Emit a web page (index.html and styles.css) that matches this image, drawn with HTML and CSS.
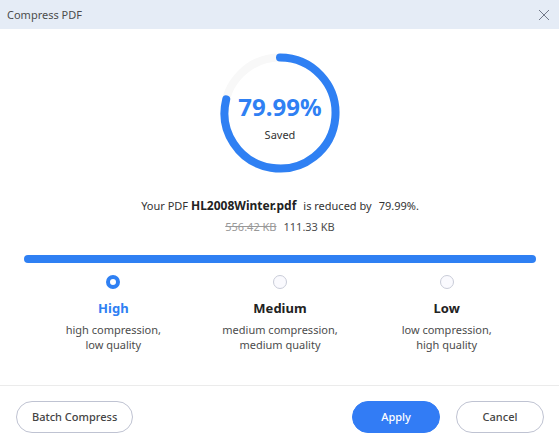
FILE: index.html
```html
<!DOCTYPE html>
<html lang="en">
<head>
<meta charset="utf-8">
<title>Compress PDF</title>
<link rel="stylesheet" href="styles.css">
</head>
<body>
<main class="dialog">
  <header class="titlebar">
    <h1 class="title">Compress PDF</h1>
    <button class="close" type="button" aria-label="Close">
      <svg width="10" height="10" viewBox="0 0 10 10"><path d="M0 0L10 10M10 0L0 10" stroke="#727989" stroke-width="1"/></svg>
    </button>
  </header>
  <section class="content">
    <div class="gauge">
      <svg class="ring" width="120" height="120" viewBox="0 0 120 120">
        <circle cx="60" cy="60" r="55.5" fill="none" stroke="#f8f8f8" stroke-width="8"/>
        <path d="M60 4.5A55.5 55.5 0 1 1 6.2 46.4" fill="none" stroke="#2f80f3" stroke-width="8" stroke-linecap="round"/>
      </svg>
      <div class="gauge-text">
        <strong class="percent">79.99%</strong>
        <span class="saved">Saved</span>
      </div>
    </div>
    <p class="summary"><span>Your PDF <b>HL2008Winter.pdf</b></span><span>is reduced by</span><span>79.99%.</span></p>
    <p class="sizes"><s>556.42 KB</s><span>111.33 KB</span></p>
    <div class="bar"></div>
    <div class="levels" role="radiogroup" aria-label="Compression level">
      <label class="level"><input type="radio" name="level" checked><span class="name">High</span><span class="note">high compression,<br>low quality</span></label>
      <label class="level"><input type="radio" name="level"><span class="name">Medium</span><span class="note">medium compression,<br>medium quality</span></label>
      <label class="level"><input type="radio" name="level"><span class="name">Low</span><span class="note">low compression,<br>high quality</span></label>
    </div>
  </section>
  <footer class="footer">
    <button class="btn batch" type="button">Batch Compress</button>
    <button class="btn primary" type="button">Apply</button>
    <button class="btn" type="button">Cancel</button>
  </footer>
</main>
</body>
</html>
```
FILE: styles.css
```css
* {
  box-sizing: border-box;
}

body {
  margin: 0;
  background: #fff;
  color: #333;
  font: 11px/16px "Noto Sans", "Open Sans", sans-serif;
}

.dialog {
  display: flex;
  flex-direction: column;
  min-height: 100vh;
}

.titlebar {
  display: flex;
  align-items: center;
  justify-content: space-between;
  height: 29px;
  padding: 0 10px 0 7px;
  background: #e5ecf6;
}

.title {
  margin: 0;
  color: #4c4c4c;
  font-size: 11px;
  font-weight: 400;
}

.close {
  display: flex;
  padding: 0;
  border: 0;
  background: none;
}

.content {
  flex: 1;
  display: flex;
  flex-direction: column;
  padding: 24px 23px 0 24px;
}

.gauge {
  display: grid;
  align-self: center;
}

.ring,
.gauge-text {
  grid-area: 1 / 1;
}

.gauge-text {
  display: flex;
  flex-direction: column;
  align-items: center;
  justify-content: center;
  gap: 4px;
  padding-top: 8px;
}

.percent {
  color: #2f80f3;
  font-size: 24px;
  line-height: 32px;
}

.summary,
.sizes {
  display: flex;
  justify-content: center;
  margin: 0;
}

.summary {
  gap: 7px;
  margin-top: 25px;
}

.summary b {
  color: #222;
  font-size: 12px;
}

.sizes {
  gap: 7px;
  margin-top: 5px;
  color: #4c4c4c;
}

.sizes s {
  color: #999;
}

.bar {
  height: 8px;
  margin-top: 20px;
  border-radius: 4px;
  background: #2f80f3;
}

.levels {
  display: grid;
  grid-template-columns: repeat(3, 1fr);
  margin: 12px 6px 0;
}

.level {
  display: flex;
  flex-direction: column;
  align-items: center;
  text-align: center;
}

.level input {
  appearance: none;
  width: 14px;
  height: 14px;
  margin: 0;
  border: 1px solid #c9ccd8;
  border-radius: 50%;
  background: #fafafe;
}

.level input:checked {
  border: 4px solid #2f80f3;
  background: #fff;
}

.name {
  margin-top: 9px;
  color: #222;
  font-size: 13px;
  font-weight: 700;
  line-height: 20px;
}

.level input:checked + .name {
  color: #2f80f3;
}

.note {
  margin-top: 4px;
  color: #4c4c4c;
  line-height: 15px;
}

.footer {
  display: flex;
  gap: 16px;
  padding: 15px 15px 13px 16px;
  border-top: 1px solid #ebebeb;
}

.btn {
  width: 88px;
  height: 32px;
  padding: 0;
  border: 1px solid #bfc3d2;
  border-radius: 16px;
  background: #fff;
  color: #444;
  font: 500 11px/16px "Noto Sans", "Open Sans", sans-serif;
}

.batch {
  width: auto;
  margin-right: auto;
  padding: 0 15px;
}

.primary {
  border-color: #327cf5;
  background: #327cf5;
  color: #fff;
}
```
